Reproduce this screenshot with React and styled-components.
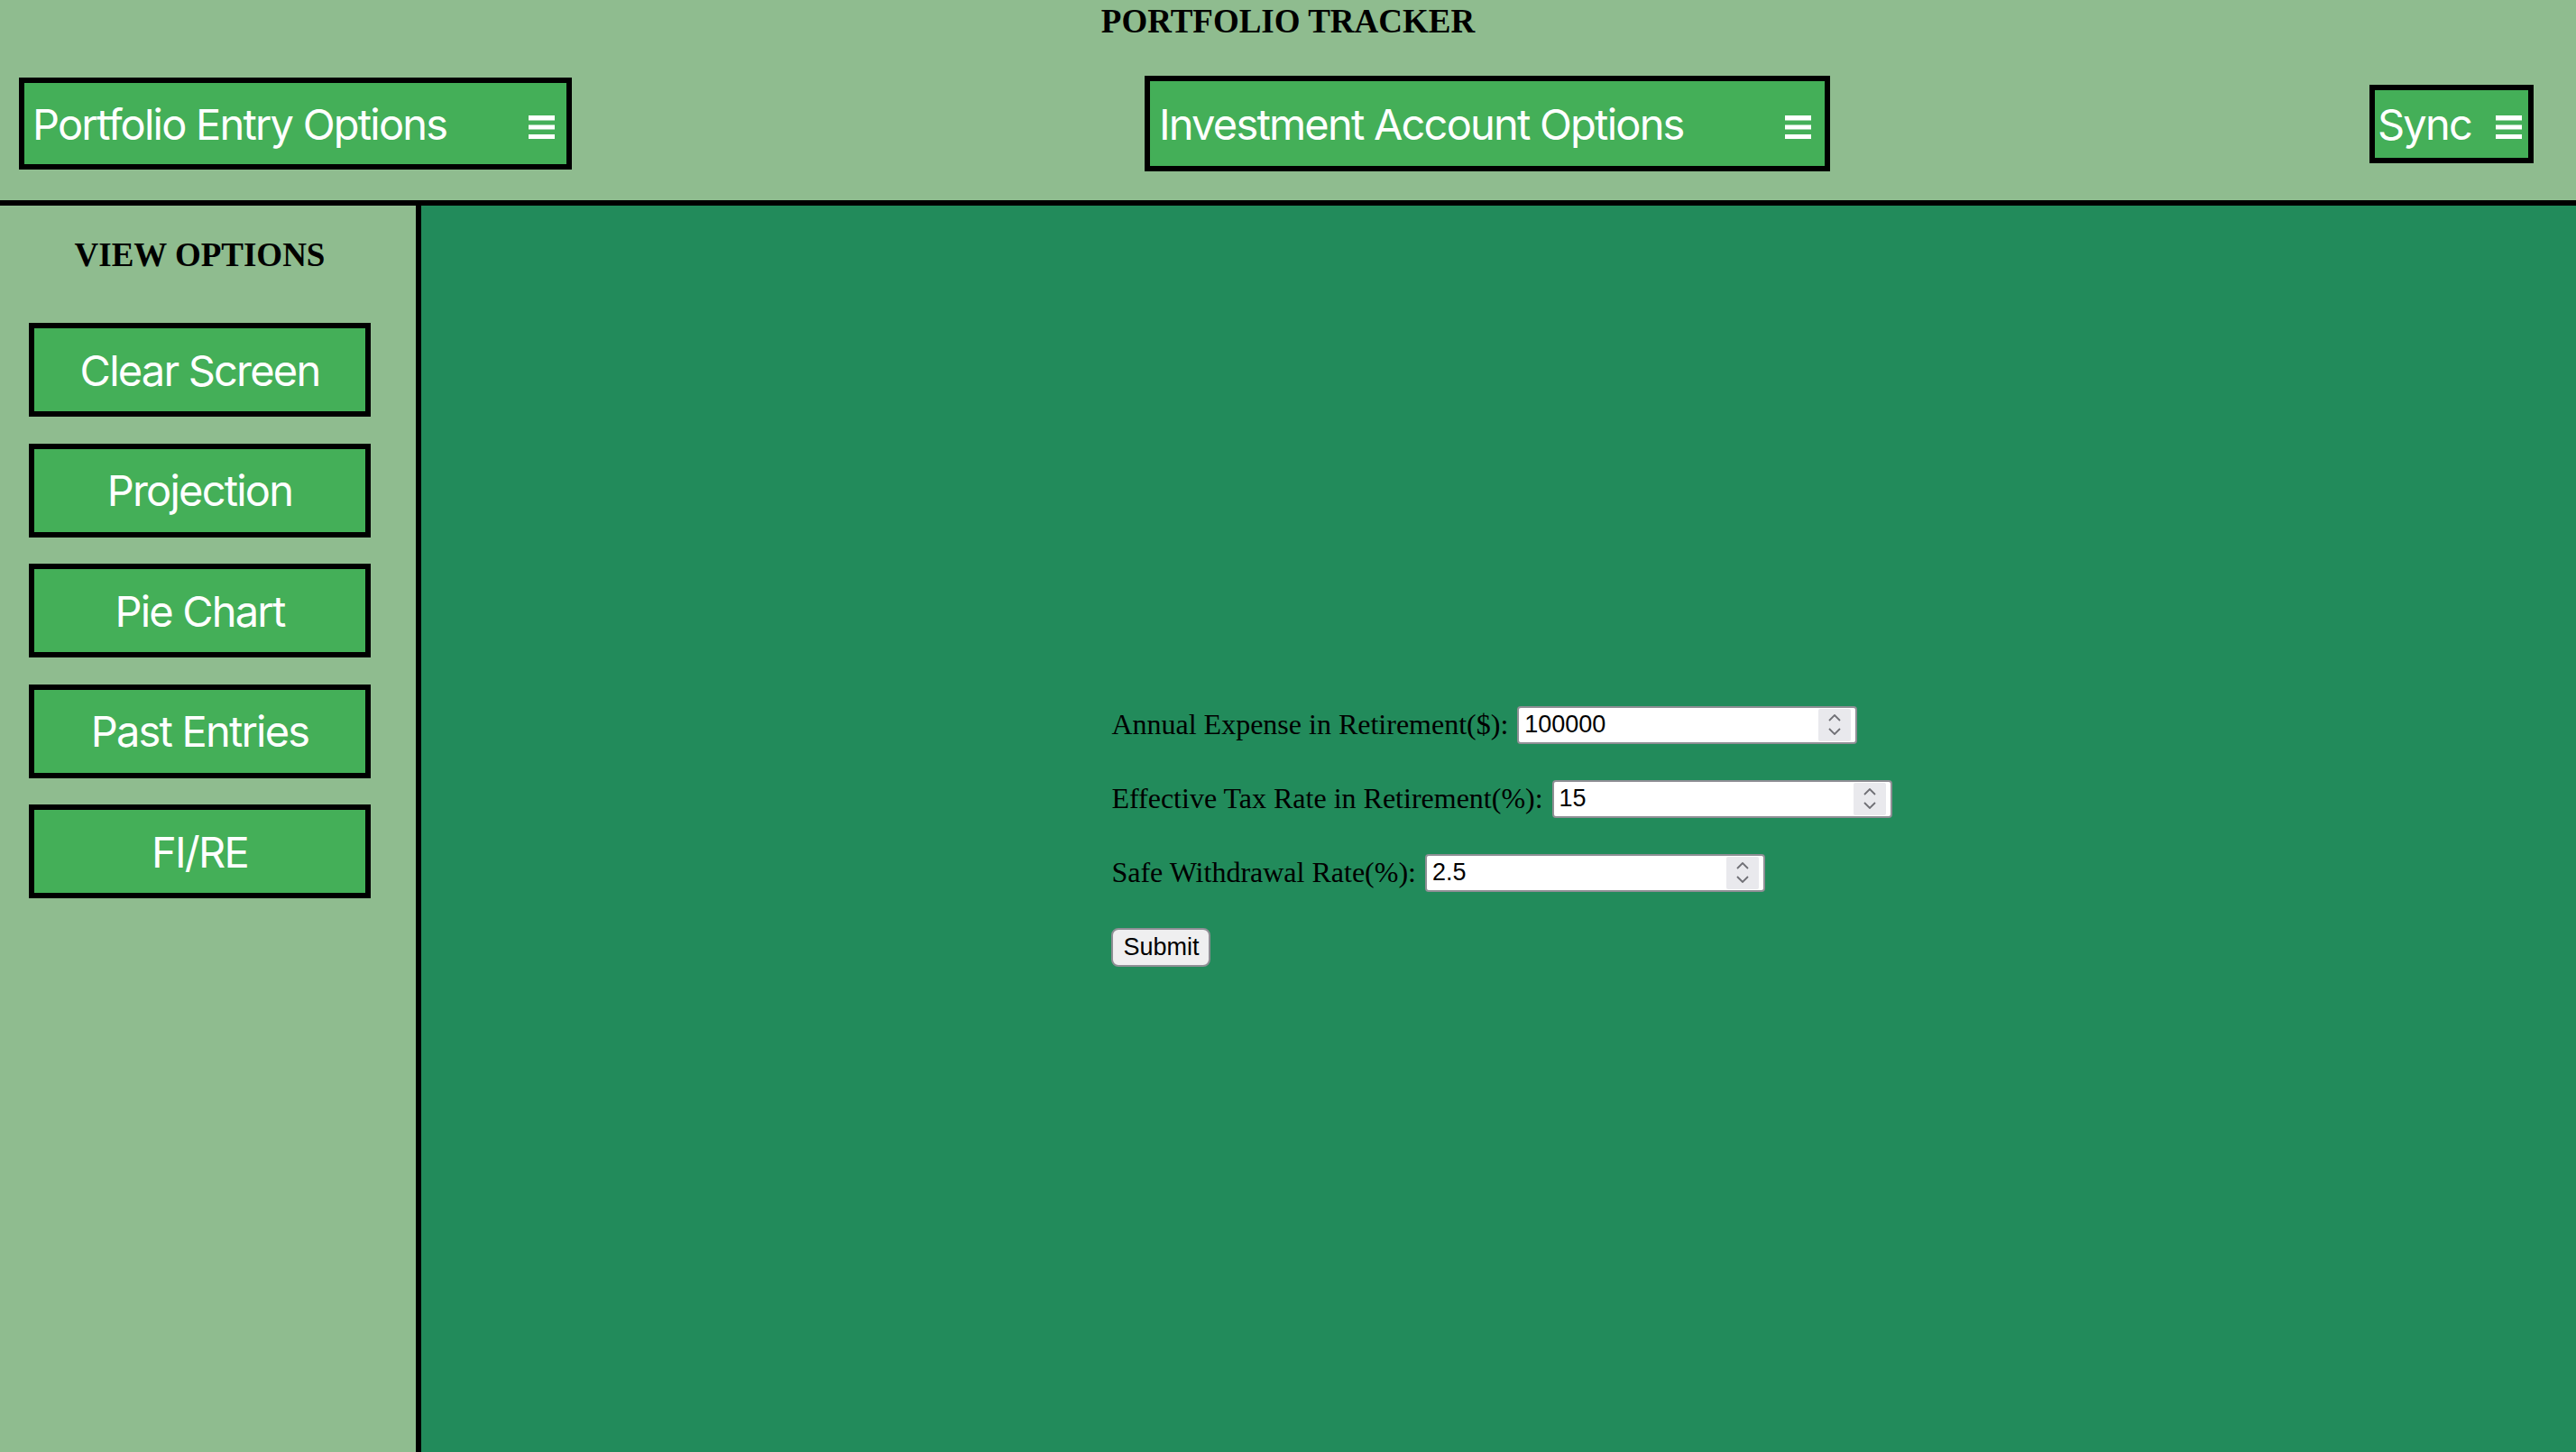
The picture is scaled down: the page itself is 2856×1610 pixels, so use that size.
import styled, { createGlobalStyle } from 'styled-components';

/* ── Global ─────────────────────────────────────────────────── */
const Global = createGlobalStyle`
  html, body { margin: 0; padding: 0; }
  body { background: #8fbc8f; font-family: "Liberation Serif", "Times New Roman", serif; }
  * { box-sizing: border-box; }
`;

/* ── Styled Components ───────────────────────────────────────── */
const Page = styled.div`display:flex;flex-direction:column;min-height:100vh;background:#8fbc8f;`;
const Header = styled.header`border-bottom:6px solid #000;`;
const Title = styled.h1`
  margin:0;padding-top:2px;text-align:center;font-family:"Liberation Serif","Times New Roman",serif;
  font-size:37px;line-height:44px;font-weight:700;color:#000;
`;
const MenuRow = styled.div`display:flex;align-items:center;padding:38px 47px 32px 21px;`;
const MenuButton = styled.button`
  display:flex;align-items:center;justify-content:space-between;
  width:${p => p.$w}px;height:${p => p.$h}px;margin-left:${p => p.$ml || 0};
  padding:0 ${p => p.$pr}px 0 ${p => p.$pl}px;
  background:#44af58;border:6px solid #000;border-radius:0;cursor:pointer;
  font-family:Inter,"Helvetica Neue",Arial,sans-serif;font-size:47px;font-weight:400;
  letter-spacing:-1.8px;color:#fff;white-space:nowrap;
`;
const Burger = styled.svg`flex:none;display:block;margin-top:8px;`;

const Body = styled.div`flex:1;display:flex;`;
const Sidebar = styled.aside`
  width:467px;flex:none;padding:0 18px 0 0;border-right:6px solid #000;
  display:flex;flex-direction:column;align-items:center;
`;
const SideTitle = styled.h3`
  margin:33px 0 53px;font-family:"Liberation Serif","Times New Roman",serif;
  font-size:37px;line-height:44px;font-weight:700;color:#000;
`;
const ViewList = styled.div`display:flex;flex-direction:column;gap:29.5px;`;
const ViewButton = styled.button`
  width:379px;height:104px;background:#44af58;border:6px solid #000;border-radius:0;
  font-family:Inter,"Helvetica Neue",Arial,sans-serif;font-size:47px;letter-spacing:-1.8px;
  color:#fff;cursor:pointer;
`;

const Main = styled.main`flex:1;display:flex;align-items:center;justify-content:center;background:#228b5b;`;
const Form = styled.form`display:flex;flex-direction:column;align-items:flex-start;gap:40px;padding:16px 0 0 7px;`;
const Field = styled.div`display:flex;align-items:center;gap:10px;`;
const Label = styled.label`font-family:"Liberation Serif","Times New Roman",serif;font-size:32px;color:#000;`;
const NumberBox = styled.div`
  display:flex;align-items:center;width:377px;height:42px;padding:0 5px 0 5px;
  background:#fff;border:2px solid #8f8f95;border-radius:4px;
`;
const NumInput = styled.input`
  flex:1;min-width:0;border:none;outline:none;background:transparent;padding:0 0 0 1px;
  font-family:"Liberation Sans",Arial,sans-serif;font-size:27px;color:#000;
`;
const Spinner = styled.div`
  flex:none;width:36px;height:36px;background:#e9e9ed;border-radius:2px;
  display:flex;flex-direction:column;align-items:center;justify-content:center;gap:7px;
`;
const SubmitButton = styled.button`
  height:43px;padding:0 11px;background:#efeff0;border:2px solid #8f8f95;border-radius:8px;
  font-family:"Liberation Sans",Arial,sans-serif;font-size:27px;color:#000;
`;

/* ── Icons ───────────────────────────────────────────────────── */
const Hamburger = () => (
  <Burger width="29" height="26" viewBox="0 0 29 26" aria-hidden="true">
    <rect x="0" y="0" width="29" height="5.5" fill="#fff" />
    <rect x="0" y="10.5" width="29" height="5" fill="#fff" />
    <rect x="0" y="21" width="29" height="5" fill="#fff" />
  </Burger>
);
const Chevron = ({ up }) => (
  <svg width="14" height="8" viewBox="0 0 14 8" aria-hidden="true">
    <path d={up ? 'M1 7 L7 1 L13 7' : 'M1 1 L7 7 L13 1'} fill="none" stroke="#6f6f75" strokeWidth="1.8" />
  </svg>
);

const MENUS = [
  { id: 'entry', label: 'Portfolio Entry Options', w: 613, h: 102, pl: 9, pr: 13 },
  { id: 'account', label: 'Investment Account Options', w: 760, h: 106, pl: 10, pr: 15, ml: '635px' },
  { id: 'sync', label: 'Sync', w: 182, h: 87, pl: 3, pr: 7, ml: 'auto' },
];
const VIEWS = ['Clear Screen', 'Projection', 'Pie Chart', 'Past Entries', 'FI/RE'];
const FIELDS = [
  { id: 'expense', label: 'Annual Expense in Retirement($):', value: '100000' },
  { id: 'tax', label: 'Effective Tax Rate in Retirement(%):', value: '15' },
  { id: 'swr', label: 'Safe Withdrawal Rate(%):', value: '2.5' },
];

/* ── Component ───────────────────────────────────────────────── */
export default function App() {
  return (
    <Page>
      <Global />
      <Header>
        <Title>PORTFOLIO TRACKER</Title>
        <MenuRow>
          {MENUS.map(m => (
            <MenuButton key={m.id} $w={m.w} $h={m.h} $pl={m.pl} $pr={m.pr} $ml={m.ml}>
              <span>{m.label}</span>
              <Hamburger />
            </MenuButton>
          ))}
        </MenuRow>
      </Header>
      <Body>
        <Sidebar>
          <SideTitle>VIEW OPTIONS</SideTitle>
          <ViewList>
            {VIEWS.map(v => <ViewButton key={v}>{v}</ViewButton>)}
          </ViewList>
        </Sidebar>
        <Main>
          <Form onSubmit={e => e.preventDefault()}>
            {FIELDS.map(f => (
              <Field key={f.id}>
                <Label htmlFor={f.id}>{f.label}</Label>
                <NumberBox>
                  <NumInput id={f.id} type="text" defaultValue={f.value} />
                  <Spinner><Chevron up /><Chevron /></Spinner>
                </NumberBox>
              </Field>
            ))}
            <SubmitButton type="submit">Submit</SubmitButton>
          </Form>
        </Main>
      </Body>
    </Page>
  );
}
